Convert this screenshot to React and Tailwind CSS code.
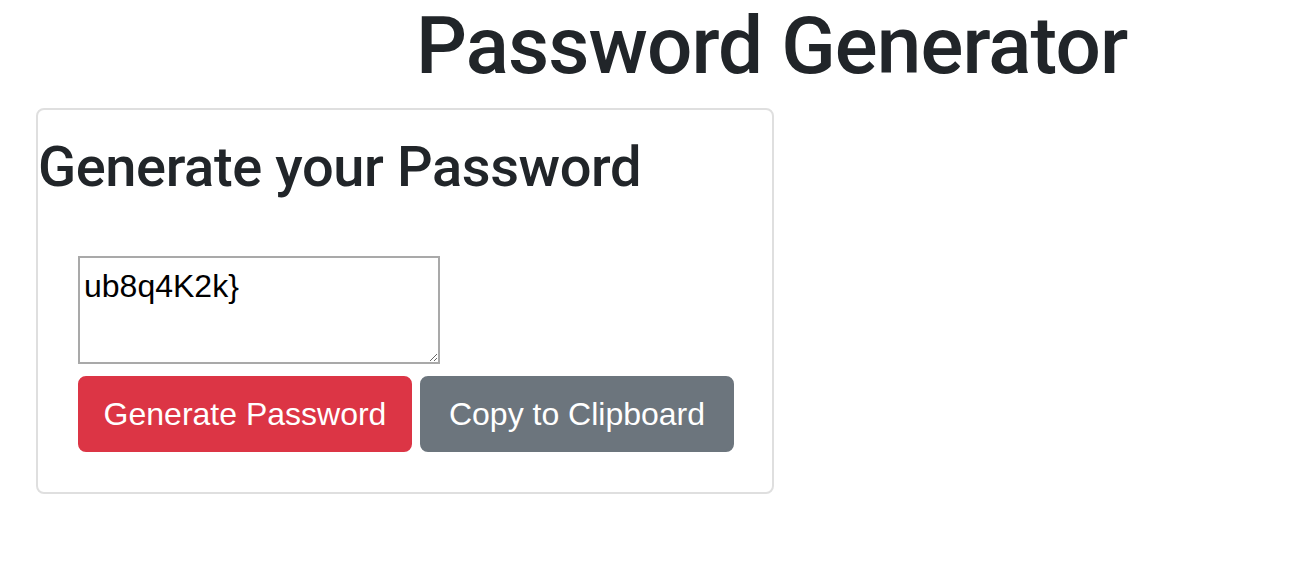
import React, { useState } from 'react';

const App = () => {
  const [password] = useState('ub8q4K2k}');

  return (
    <div className="min-h-[588px] bg-white text-[#212529] font-['Liberation_Sans',Arial,sans-serif]">
      <h1 className="pl-[416px] font-['Roboto',Arial,sans-serif] text-[80px] leading-[92px] font-medium tracking-[-0.9px] mb-[16px] whitespace-nowrap">
        Password Generator
      </h1>

      <div className="ml-[36px] w-[738px] border-2 border-[#dfdfdf] rounded-[8px]">
        <h2 className="mt-[24px] font-['Roboto',Arial,sans-serif] text-[56px] leading-[67px] font-medium tracking-[-0.4px] whitespace-nowrap">
          Generate your Password
        </h2>

        <div className="px-[40px] pt-[55px] pb-[40px] flex flex-col items-start">
          <textarea
            readOnly
            value={password}
            className="block w-[362px] h-[108px] border-2 border-[#a9a9a9] p-[4px] text-[32px] leading-normal text-black font-['Liberation_Sans',Arial,sans-serif] outline-none"
          />
          <div className="mt-[12px] flex gap-2 whitespace-nowrap">
            <button className="shrink-0 w-[334px] h-[76px] flex items-center justify-center border-2 border-[#dc3545] bg-[#dc3545] text-white text-[32px] leading-[48px] rounded-[8px]">
              Generate Password
            </button>
            <button className="shrink-0 w-[314px] h-[76px] flex items-center justify-center border-2 border-[#6c757d] bg-[#6c757d] text-white text-[32px] leading-[48px] rounded-[8px]">
              Copy to Clipboard
            </button>
          </div>
        </div>
      </div>
    </div>
  );
};

export default App;
